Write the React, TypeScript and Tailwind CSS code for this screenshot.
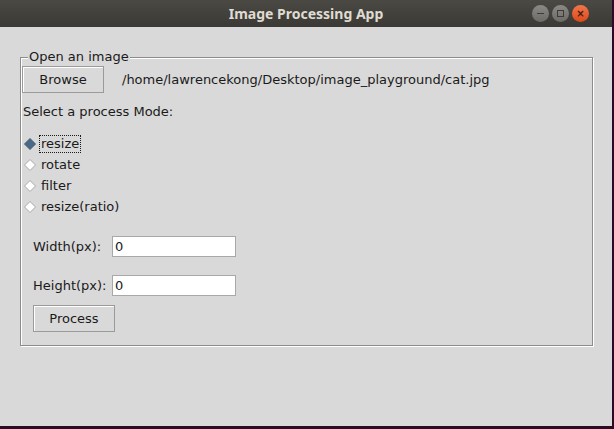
import React from "react";

const font = { fontFamily: '"DejaVu Sans", "Noto Sans", sans-serif' };

function Diamond({ on }: { on?: boolean }) {
  return (
    <svg width="12" height="12" viewBox="0 0 12 12" className="shrink-0">
      <polygon
        points="6,0.5 11.5,6 6,11.5 0.5,6"
        fill={on ? "#4a6984" : "#ffffff"}
        stroke={on ? "#3d5a74" : "#a8a8a8"}
        strokeWidth="1"
      />
    </svg>
  );
}

function TkButton({ label, className }: { label: string; className?: string }) {
  return (
    <div
      className={
        "flex h-[27px] w-[82px] items-center justify-center border border-[#9a9a9a] bg-[#d9d9d9] text-[13px] text-[#1a1a1a] shadow-[inset_1px_1px_0_#ffffff] " +
        (className ?? "")
      }
    >
      {label}
    </div>
  );
}

export default function App() {
  const modes = ["resize", "rotate", "filter", "resize(ratio)"];
  return (
    <div className="flex h-[429px] w-[614px] flex-col overflow-hidden bg-[#300a24]" style={font}>
      <div className="flex h-[426px] w-[612px] flex-col">
        {/* title bar */}
        <div className="relative flex h-[27px] shrink-0 items-center justify-center bg-gradient-to-b from-[#4a4944] to-[#3a3935]">
          <span className="text-[14px] font-bold text-[#dfdbd2]" style={{ fontFamily: '"Noto Sans", "DejaVu Sans", sans-serif' }}>
            Image Processing App
          </span>
          <div className="absolute right-[23px] top-[5px] flex gap-[3px]">
            <div className="flex h-[17px] w-[17px] items-center justify-center rounded-full bg-gradient-to-b from-[#8a8984] to-[#6c6b67]">
              <div className="h-[1.5px] w-[7px] bg-[#3c3b37]" />
            </div>
            <div className="flex h-[17px] w-[17px] items-center justify-center rounded-full bg-gradient-to-b from-[#8a8984] to-[#6c6b67]">
              <div className="h-[7px] w-[7px] border border-[#3c3b37]" />
            </div>
            <div className="flex h-[17px] w-[17px] items-center justify-center rounded-full bg-gradient-to-b from-[#f0764a] to-[#dd4814] text-[10px] font-bold leading-none text-[#3c1a0c]">
              ×
            </div>
          </div>
        </div>

        {/* body */}
        <div className="flex-1 bg-[#d9d9d9] pl-[20px] pt-[30px]">
          <div className="relative h-[289px] w-[573px] border border-[#8c8c8c] shadow-[inset_1px_1px_0_#ffffff,1px_1px_0_#ffffff]">
            <span className="absolute -top-[9px] left-[7px] bg-[#d9d9d9] px-[1px] text-[13px] leading-[16px] text-[#1a1a1a]">
              Open an image
            </span>

            <div className="flex items-center pl-[1px] pt-[8px]">
              <TkButton label="Browse" />
              <span className="ml-[18px] text-[13px] text-[#1a1a1a]">
                /home/lawrencekong/Desktop/image_playground/cat.jpg
              </span>
            </div>

            <div className="mt-[11px] pl-[2px] text-[13px] leading-[16px] text-[#1a1a1a]">
              Select a process Mode:
            </div>

            <div className="mt-[13px] flex flex-col">
              {modes.map((m, i) => (
                <div key={m} className="flex h-[21px] items-center pl-[3px]">
                  <Diamond on={i === 0} />
                  <span
                    className={
                      "ml-[3px] px-[1px] text-[13px] leading-[16px] text-[#1a1a1a] " +
                      (i === 0 ? "border border-dotted border-[#1a1a1a]" : "border border-transparent")
                    }
                  >
                    {m}
                  </span>
                </div>
              ))}
            </div>

            <div className="mt-[19px] flex items-center pl-[12px]">
              <span className="w-[79px] text-[13px] text-[#1a1a1a]">Width(px):</span>
              <div className="flex h-[21px] w-[124px] items-center border border-[#a8a8a8] bg-white pl-[2px] text-[13px] text-[#1a1a1a]">
                0
              </div>
            </div>

            <div className="mt-[18px] flex items-center pl-[12px]">
              <span className="w-[79px] text-[13px] text-[#1a1a1a]">Height(px):</span>
              <div className="flex h-[21px] w-[124px] items-center border border-[#a8a8a8] bg-white pl-[2px] text-[13px] text-[#1a1a1a]">
                0
              </div>
            </div>

            <div className="mt-[9px] pl-[12px]">
              <TkButton label="Process" />
            </div>
          </div>
        </div>
      </div>
    </div>
  );
}
